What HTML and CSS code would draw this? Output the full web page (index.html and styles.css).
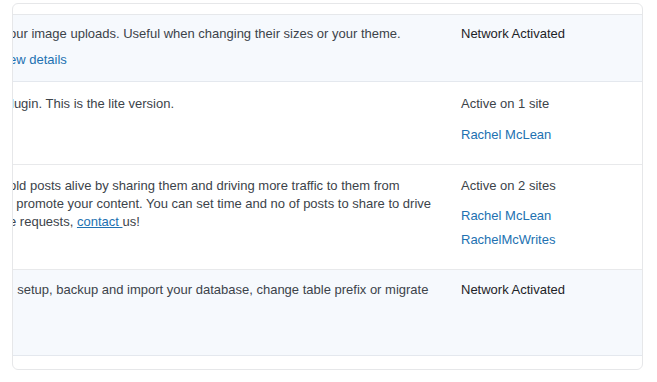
FILE: index.html
```html
<!DOCTYPE html>
<html lang="en">

<head>
    <meta charset="UTF-8">
    <meta name="viewport" content="width=device-width, initial-scale=1.0">
    <title>Plugins</title>
    <link rel="stylesheet" href="styles.css">
</head>

<body>
    <div class="plugin-table">
        <div class="table-head"></div>

        <div class="plugin-row is-network row-1">
            <div class="plugin-desc">
                <p>our image uploads. Useful when changing their sizes or your theme.</p>
                <div class="row-actions"><a href="#">ew details</a></div>
            </div>
            <div class="plugin-status">
                <p class="status-network">Network Activated</p>
            </div>
        </div>

        <div class="plugin-row row-2">
            <div class="plugin-desc">
                <p class="shift-1">lugin. This is the lite version.</p>
            </div>
            <div class="plugin-status">
                <p>Active on 1 site</p>
                <ul class="site-list">
                    <li><a href="#">Rachel McLean</a></li>
                </ul>
            </div>
        </div>

        <div class="plugin-row row-3">
            <div class="plugin-desc">
                <p>old posts alive by sharing them and driving more traffic to them from<br>&nbsp;&nbsp;promote your content. You can set time and no of posts to share to drive<br>e requests, <a class="inline-link" href="#">contact </a>us!</p>
            </div>
            <div class="plugin-status">
                <p>Active on 2 sites</p>
                <ul class="site-list">
                    <li><a href="#">Rachel McLean</a></li>
                    <li><a href="#">RachelMcWrites</a></li>
                </ul>
            </div>
        </div>

        <div class="plugin-row is-network row-4">
            <div class="plugin-desc">
                <p class="shift-2">:&nbsp;setup, backup and import your database, change table prefix or migrate</p>
            </div>
            <div class="plugin-status">
                <p class="status-network">Network Activated</p>
            </div>
        </div>

        <div class="table-foot"></div>
    </div>
</body>

</html>
```

FILE: styles.css
```css
body {
    margin: 0;
    background: #fff;
    font-family: "Liberation Sans", Arial, sans-serif;
    font-size: 13px;
    line-height: 18px;
    color: #3c434a;
}

p,
ul {
    margin: 0;
    padding: 0;
    list-style: none;
}

a {
    color: #2271b1;
    text-decoration: none;
}

.plugin-table {
    width: 629px;
    height: 365px;
    margin: 3px 0 0 12px;
    border: 1px solid #e6e7e9;
    border-radius: 6px;
    overflow: hidden;
    display: flex;
    flex-direction: column;
}

.table-head {
    height: 10px;
    flex: none;
    border-bottom: 1px solid #e6e8eb;
}

.plugin-row {
    display: grid;
    grid-template-columns: 448px 1fr;
    flex: none;
    padding-top: 12px;
    border-bottom: 1px solid #e8e9eb;
    box-sizing: border-box;
}

.plugin-row.is-network {
    background: #f6f9fd;
    border-bottom-color: #e4e8ee;
}

.row-1 { height: 67px; padding-top: 10px; }
.row-2 { height: 83px; padding-top: 13px; }
.row-3 { height: 105px; }
.row-4 { height: 86px; padding-top: 11px; }

.plugin-desc {
    margin-left: -4px;
    white-space: nowrap;
}

.shift-1 {
    margin-left: 2px;
}

.shift-2 {
    margin-left: 1px;
}

.row-actions {
    margin-top: 8px;
}

.inline-link {
    text-decoration: underline;
}

.status-network {
    color: #1d2327;
}

.site-list {
    margin-top: 12px;
}

.row-2 .site-list {
    margin-top: 13px;
}

.site-list li + li {
    margin-top: 6px;
}

.table-foot {
    flex: 1;
}
```
